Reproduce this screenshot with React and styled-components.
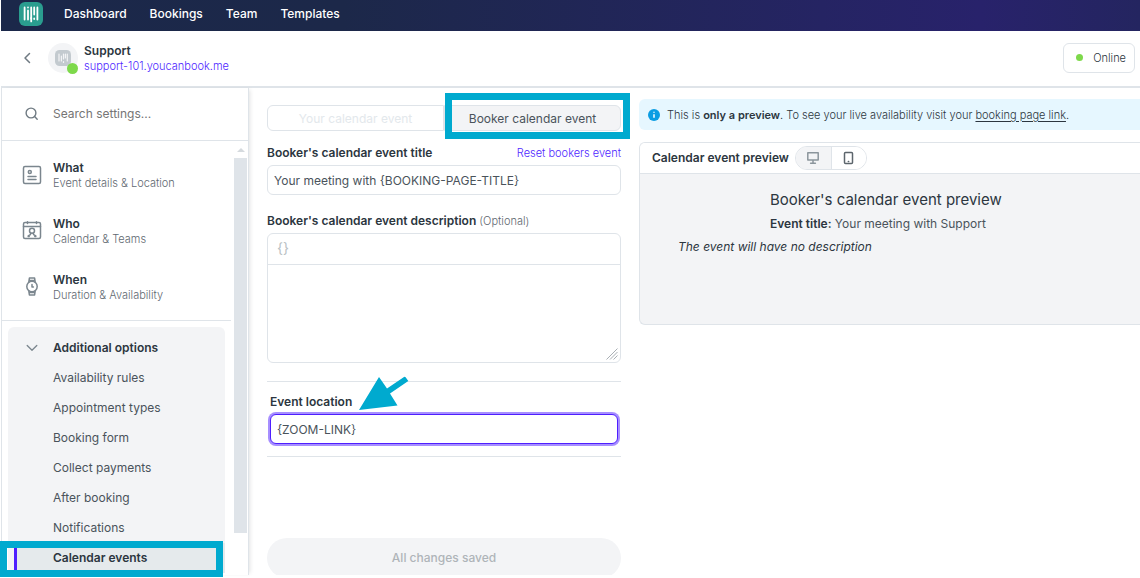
import React from "react";
import styled, { createGlobalStyle } from "styled-components";

const c = {
  ink: "#2c3640",
  text: "#4a535b",
  muted: "#5f6971",
  line: "#dfe4e9",
  soft: "#f3f4f6",
  violet: "#4f1fff",
  teal: "#00aacf",
  green: "#7ed94b",
};

const Global = createGlobalStyle`
  *, *::before, *::after { box-sizing: border-box; }
  body { margin: 0; background: #fff; }
  body, button, input, textarea { font-family: Inter, "Liberation Sans", sans-serif; }
  h1, h2, h3, p { margin: 0; }
  button { cursor: pointer; }
`;

const Page = styled.div`
  display: flex;
  flex-direction: column;
  height: 100vh;
  padding: 0 0 3px 1px;
  overflow: hidden;
  color: ${c.ink};
  font-size: 12px;
  line-height: 16px;
`;

const TopBar = styled.header`
  display: flex;
  flex: none;
  height: 31px;
  padding: 0 18px 4px;
  align-items: center;
  gap: 21px;
  background: linear-gradient(90deg, #1b284a 0%, #1c2849 30%, #252463 72%, #28226b 86%, #242560 100%);
`;

const Nav = styled.nav`
  display: flex;
  gap: 23px;
`;

const NavLink = styled.a`
  color: #fff;
  font-size: 12px;
  font-weight: 500;
  text-decoration: none;
`;

const ProfileBar = styled.div`
  display: flex;
  flex: none;
  height: 57px;
  padding: 0 5px 2px 20px;
  align-items: center;
  border-bottom: 2px solid ${c.line};
`;

const IconButton = styled.button`
  display: flex;
  padding: 0;
  border: 0;
  background: none;
  color: #6f7a82;
`;

const Avatar = styled.div`
  position: relative;
  display: flex;
  width: 30px;
  height: 30px;
  margin: 0 6px 0 14px;
  align-items: center;
  justify-content: center;
  border-radius: 50%;
  background: ${c.soft};
`;

const Dot = styled.span`
  width: ${(p) => p.$size}px;
  height: ${(p) => p.$size}px;
  border-radius: 50%;
  background: ${c.green};
`;

const AvatarDot = styled(Dot)`
  position: absolute;
  right: 0;
  bottom: -1px;
`;

const ProfileText = styled.div`
  display: flex;
  flex: 1;
  flex-direction: column;
  align-items: flex-start;
  padding-top: 2px;
`;

const ProfileName = styled.h1`
  font-size: 12px;
  font-weight: 600;
  line-height: 16px;
`;

const VioletLink = styled.a`
  color: ${c.violet};
  font-size: 11px;
  font-weight: 300;
  line-height: 15px;
  text-decoration: none;
`;

const StatusButton = styled.button`
  display: flex;
  height: 30px;
  padding: 0 8px 0 12px;
  align-items: center;
  gap: 10px;
  border: 1px solid ${c.line};
  border-radius: 6px;
  background: #fff;
  color: ${c.ink};
  font-size: 11px;
  font-weight: 300;
`;

const Columns = styled.div`
  display: grid;
  flex: 1;
  min-height: 0;
  grid-template-columns: 248px minmax(0, 390fr) minmax(0, 501fr);
`;

const Sidebar = styled.aside`
  display: flex;
  flex-direction: column;
  min-height: 0;
  border: solid ${c.line};
  border-width: 0 1px;
  box-shadow: 3px 0 4px -2px rgba(40, 50, 60, 0.14);
`;

const SearchRow = styled.label`
  display: flex;
  flex: none;
  height: 53px;
  padding: 0 20px 2px 22px;
  align-items: center;
  gap: 14px;
  border-bottom: 1px solid ${c.line};
  color: #6f7a82;
`;

const SearchInput = styled.input`
  flex: 1;
  min-width: 0;
  padding: 0;
  border: 0;
  outline: 0;
  background: none;
  font-size: 12px;

  &::placeholder { color: #757575; opacity: 1; }
`;

const SidebarScroll = styled.div`
  display: flex;
  flex: 1;
  min-height: 0;
`;

const SidebarList = styled.div`
  flex: 1;
`;

const Rail = styled.div`
  display: flex;
  flex-direction: column;
  width: 17px;
  padding: 0 1px 42px 3px;
  align-items: center;
`;

const RailArrow = styled.span`
  height: 17px;
  padding-top: 7px;
  line-height: 0;
`;

const RailThumb = styled.div`
  flex: 1;
  width: 13px;
  background: ${c.line};
`;

const Sections = styled.nav`
  padding: 6px 0 5px;
  border-bottom: 1px solid ${c.line};
`;

const Section = styled.a`
  display: flex;
  height: 56px;
  padding: 0 20px;
  align-items: center;
  gap: 11px;
  color: #7b868e;
  text-decoration: none;
`;

const SectionTitle = styled.div`
  color: ${c.ink};
  font-size: 12px;
  font-weight: 600;
  line-height: 16px;
`;

const SectionNote = styled.div`
  color: ${c.muted};
  font-size: 11px;
  font-weight: 300;
  line-height: 15px;
`;

const Options = styled.div`
  margin: 6px 6px 0;
  padding: 5px 0 2px;
  border-radius: 6px;
  background: ${c.soft};
`;

const OptionsHeader = styled.button`
  display: flex;
  width: 100%;
  height: 31px;
  padding: 0 18px;
  align-items: center;
  gap: 15px;
  border: 0;
  background: none;
  color: ${c.ink};
  font-size: 12px;
  font-weight: 600;

  svg { color: #7b868e; }
`;

const Option = styled.a`
  position: relative;
  display: flex;
  height: 30px;
  margin-left: 6px;
  padding-left: ${(p) => (p.$active ? 36 : 39)}px;
  align-items: center;
  border-left: ${(p) => (p.$active ? `3px solid ${c.violet}` : "0")};
  background: ${(p) => (p.$active ? "#e5eaec" : "none")};
  color: ${(p) => (p.$active ? c.ink : c.text)};
  font-size: 12px;
  font-weight: ${(p) => (p.$active ? 600 : 400)};
  text-decoration: none;
`;

const Marker = styled.span`
  position: absolute;
  inset: ${(p) => p.$inset};
  border: 7px solid ${c.teal};
  pointer-events: none;
`;

const Editor = styled.main`
  display: flex;
  flex-direction: column;
  min-height: 0;
  padding: 17px 18px 0;
  overflow: hidden;
`;

const Tabs = styled.div`
  position: relative;
  display: flex;
  flex: none;
  height: 26px;
`;

const Tab = styled.button`
  flex: 1;
  padding: 0;
  border: 1px solid ${c.line};
  border-radius: ${(p) => (p.$active ? "0 6px 6px 0" : "6px 0 0 6px")};
  background: ${(p) => (p.$active ? c.soft : "#fff")};
  color: ${(p) => (p.$active ? c.text : "#e3e8ec")};
  font-size: 12px;
`;

const FieldHead = styled.div`
  display: flex;
  flex: none;
  height: 16px;
  margin: ${(p) => p.$margin};
  align-items: center;
  justify-content: space-between;
`;

const Label = styled.label`
  font-size: 12px;
  font-weight: 600;
  line-height: 16px;
`;

const Optional = styled.span`
  color: ${c.muted};
  font-size: 11px;
  font-weight: 300;
`;

const TextInput = styled.input`
  flex: none;
  width: 100%;
  height: 30px;
  padding: 0 6px;
  border: 1px solid ${c.line};
  border-radius: 6px;
  outline: 0;
  background: #fff;
  color: ${c.text};
  font-size: 12px;
  ${(p) => p.$focused && `border-color: ${c.violet}; box-shadow: 0 0 0 2px #a78fff;`}
`;

const RichText = styled.div`
  display: flex;
  flex: none;
  flex-direction: column;
  border: 1px solid ${c.line};
  border-radius: 6px;
`;

const RichToolbar = styled.div`
  display: flex;
  height: 31px;
  padding: 0 9px 2px;
  align-items: center;
  border-bottom: 1px solid ${c.line};
`;

const BraceButton = styled.button`
  padding: 0;
  border: 0;
  background: none;
  color: #b9bfc4;
  font-size: 14px;
  line-height: 16px;
`;

const RichBody = styled.div`
  position: relative;
  display: flex;
`;

const RichArea = styled.textarea`
  flex: 1;
  height: 97px;
  padding: 6px;
  border: 0;
  border-radius: 6px;
  outline: 0;
  background: none;
  resize: none;
  font-size: 12px;
`;

const Grip = styled.svg`
  position: absolute;
  right: 2px;
  bottom: 2px;
`;

const Location = styled.section`
  position: relative;
  flex: none;
  margin-top: 18px;
  padding: 12px 3px;
  border: solid ${c.line};
  border-width: 1px 0;
`;

const Pointer = styled.svg`
  position: absolute;
  left: 92px;
  top: -7px;
  pointer-events: none;
`;

const SaveButton = styled.button`
  flex: none;
  height: 40px;
  margin-top: 81px;
  padding: 0 0 2px;
  border: 0;
  border-radius: 20px;
  background: ${c.soft};
  color: #afb4b9;
  font-size: 12px;
  font-weight: 500;
`;

const Preview = styled.section`
  padding-top: 11px;
`;

const Notice = styled.div`
  display: flex;
  height: 31px;
  padding: 0 9px;
  align-items: center;
  gap: 7px;
  border-radius: 6px 0 0 6px;
  background: #e6f7ff;
  font-size: 11px;
  font-weight: 300;
  white-space: nowrap;

  b { font-weight: 600; }
  a { color: ${c.ink}; text-underline-offset: 2px; }
`;

const Card = styled.article`
  margin-top: 12px;
  border: solid ${c.line};
  border-width: 1px 0 1px 1px;
  border-radius: 6px 0 0 6px;
  background: ${c.soft};
  overflow: hidden;
`;

const CardHead = styled.div`
  display: flex;
  height: 31px;
  padding-left: 12px;
  align-items: center;
  gap: 6px;
  border-bottom: 1px solid ${c.line};
  background: #fff;
`;

const CardTitle = styled.h2`
  font-size: 12px;
  font-weight: 600;
`;

const Devices = styled.div`
  display: flex;
  height: 24px;
  border: 1px solid ${c.line};
  border-radius: 12px;
  overflow: hidden;
`;

const Device = styled.button`
  display: flex;
  width: 35px;
  padding: 0;
  align-items: center;
  justify-content: center;
  border: 0;
  background: ${(p) => (p.$active ? c.soft : "#fff")};
  color: ${(p) => (p.$active ? "#8b959c" : "#5c656c")};

  & + & { border-left: 1px solid ${c.line}; }
`;

const CardBody = styled.div`
  min-height: 150px;
  padding: 16px 38px;
`;

const PreviewHead = styled.h3`
  padding-left: 92px;
  font-size: 15px;
  font-weight: 400;
  line-height: 20px;
`;

const PreviewLine = styled.p`
  margin-top: ${(p) => (p.$note ? 7 : 6)}px;
  padding-left: ${(p) => (p.$note ? 0 : 92)}px;
  color: ${(p) => (p.$note ? c.ink : c.text)};
  font-size: 12px;
  font-style: ${(p) => (p.$note ? "italic" : "normal")};
  line-height: 16px;

  b { color: ${c.ink}; font-weight: 600; }
`;

const Logo = () => (
  <svg width="24" height="29" viewBox="0 0 24 29" aria-label="Home">
    <rect x="0" y="3" width="24" height="24" rx="6" fill="#2a9d8f" />
    <g stroke="#fff" strokeWidth="1.8" strokeLinecap="round">
      <path d="M5.6 8.5v12M9 11.5v9M12.2 8.5v11M15.2 8.5v7M18.4 8.5v12M15.2 19.4v.6" />
      <path d="M9 8.4v.2M12.2 19v3.4" />
    </g>
  </svg>
);

const line = { fill: "none", stroke: "currentColor", strokeWidth: 1.5, strokeLinecap: "round", strokeLinejoin: "round" };

const DetailsIcon = () => (
  <svg width="20" height="20" viewBox="0 0 20 20" {...line}>
    <rect x="1.5" y="1.5" width="17" height="17" rx="1.5" />
    <circle cx="7.8" cy="7" r="1.5" />
    <path d="M6 11.5h8M6 14.5h8" />
  </svg>
);

const PeopleIcon = () => (
  <svg width="20" height="20" viewBox="0 0 20 20" {...line}>
    <rect x="1.5" y="1.5" width="17" height="16" rx="1.5" />
    <path d="M1.5 5.4h17M5.5 .8v1.8M14.5 .8v1.8" />
    <circle cx="10" cy="9.8" r="2.5" />
    <path d="M6.2 15.4v-.5l2.2-1.2.3-1.4M13.8 15.4v-.5l-2.2-1.2-.3-1.4M6.2 15.4h1M12.8 15.4h1" />
  </svg>
);

const WatchIcon = () => (
  <svg width="20" height="20" viewBox="0 0 20 20" {...line}>
    <circle cx="10" cy="9.5" r="5.2" />
    <path d="M6.8 5.1l.6-4h5.2l.6 4M6.8 13.9l.6 4.1h5.2l.6-4.1M7.4 3.4h5.2M7.4 15.6h5.2M10 7.4V10h1.4" />
  </svg>
);

const sections = [
  { title: "What", note: "Event details & Location", Icon: DetailsIcon },
  { title: "Who", note: "Calendar & Teams", Icon: PeopleIcon },
  { title: "When", note: "Duration & Availability", Icon: WatchIcon },
];

const options = [
  "Availability rules",
  "Appointment types",
  "Booking form",
  "Collect payments",
  "After booking",
  "Notifications",
  "Calendar events",
];

export default function App() {
  return (
    <>
      <Global />
      <Page>
        <TopBar>
          <Logo />
          <Nav>
            {["Dashboard", "Bookings", "Team", "Templates"].map((item) => (
              <NavLink href="#" key={item}>{item}</NavLink>
            ))}
          </Nav>
        </TopBar>

        <ProfileBar>
          <IconButton aria-label="Back">
            <svg width="13" height="14" viewBox="0 0 13 14" {...line}>
              <path d="M8.5 2.5L4 7l4.5 4.5" />
            </svg>
          </IconButton>
          <Avatar>
            <svg width="16" height="16" viewBox="0 0 16 16">
              <rect width="16" height="16" rx="4.5" fill="#c3cacf" />
              <path d="M4 4v7M6.4 6v5M8.5 4v5M10.4 4v4M12.3 4v7M8.5 11.6v.9" stroke="#f3f4f6" strokeWidth="1.2" strokeLinecap="round" />
            </svg>
            <AvatarDot $size={11} />
          </Avatar>
          <ProfileText>
            <ProfileName>Support</ProfileName>
            <VioletLink href="#">support-101.youcanbook.me</VioletLink>
          </ProfileText>
          <StatusButton><Dot $size={7} />Online</StatusButton>
        </ProfileBar>

        <Columns>
          <Sidebar>
            <SearchRow>
              <svg width="15" height="15" viewBox="0 0 15 15" {...line} strokeWidth="1.4">
                <circle cx="7" cy="7" r="4.9" />
                <path d="M10.6 10.6l2.6 2.6" />
              </svg>
              <SearchInput aria-label="Search settings" placeholder="Search settings..." />
            </SearchRow>
            <SidebarScroll>
              <SidebarList>
                <Sections>
                  {sections.map(({ title, note, Icon }) => (
                    <Section href="#" key={title}>
                      <Icon />
                      <div>
                        <SectionTitle>{title}</SectionTitle>
                        <SectionNote>{note}</SectionNote>
                      </div>
                    </Section>
                  ))}
                </Sections>
                <Options>
                  <OptionsHeader aria-expanded="true">
                    <svg width="12" height="12" viewBox="0 0 12 12" {...line} strokeWidth="1.3">
                      <path d="M1.2 3.5L6 8.3l4.8-4.8" />
                    </svg>
                    Additional options
                  </OptionsHeader>
                  {options.map((name) => {
                    const active = name === "Calendar events";
                    return (
                      <Option href="#" key={name} $active={active}>
                        {name}
                        {active && <Marker $inset="-2px 2px -4px -17px" />}
                      </Option>
                    );
                  })}
                </Options>
              </SidebarList>
              <Rail aria-hidden="true">
                <RailArrow>
                  <svg width="8" height="4" viewBox="0 0 8 4"><path d="M0 4l4-4 4 4z" fill="#d5dade" /></svg>
                </RailArrow>
                <RailThumb />
              </Rail>
            </SidebarScroll>
          </Sidebar>

          <Editor>
            <Tabs>
              <Tab>Your calendar event</Tab>
              <Tab $active>Booker calendar event</Tab>
              <Marker $inset="-12px -9px -8px 178px" />
            </Tabs>

            <FieldHead $margin="14px 0 4px">
              <Label htmlFor="title">Booker's calendar event title</Label>
              <VioletLink href="#">Reset bookers event</VioletLink>
            </FieldHead>
            <TextInput id="title" defaultValue="Your meeting with {BOOKING-PAGE-TITLE}" />

            <FieldHead $margin="18px 0 4px">
              <Label htmlFor="description">
                Booker's calendar event description <Optional>(Optional)</Optional>
              </Label>
            </FieldHead>
            <RichText>
              <RichToolbar>
                <BraceButton aria-label="Insert placeholder">{"{}"}</BraceButton>
              </RichToolbar>
              <RichBody>
                <RichArea id="description" />
                <Grip width="12" height="12" viewBox="0 0 12 12" stroke="#a9afb4" strokeWidth="1">
                  <path d="M.5 11.5l11-11M4 11.5l7.5-7.5M7.5 11.5l4-4" />
                </Grip>
              </RichBody>
            </RichText>

            <Location>
              <FieldHead $margin="0 0 4px">
                <Label htmlFor="location">Event location</Label>
              </FieldHead>
              <TextInput id="location" $focused defaultValue="{ZOOM-LINK}" />
              <Pointer width="52" height="36" viewBox="0 0 52 36" aria-hidden="true">
                <path d="M0 35L20 2 28 13.5 45 2q1-.6 1.8.4l2.5 3.6L31 18.5l7.5 12z" fill={c.teal} />
              </Pointer>
            </Location>

            <SaveButton>All changes saved</SaveButton>
          </Editor>

          <Preview>
            <Notice>
              <svg width="12" height="12" viewBox="0 0 12 12">
                <circle cx="6" cy="6" r="6" fill="#0b9de3" />
                <path d="M6 5.2v3.6M6 2.8v1" stroke="#fff" strokeWidth="1.5" />
              </svg>
              <p>
                This is <b>only a preview</b>. To see your live availability visit your <a href="#">booking page link</a>.
              </p>
            </Notice>
            <Card>
              <CardHead>
                <CardTitle>Calendar event preview</CardTitle>
                <Devices>
                  <Device $active aria-label="Desktop">
                    <svg width="12" height="12" viewBox="0 0 12 12" {...line}>
                      <path d="M.8.8h10.4v7.2H.8zM6 8v3M3.6 11.2h4.8" />
                    </svg>
                  </Device>
                  <Device aria-label="Mobile">
                    <svg width="12" height="14" viewBox="0 0 12 14" {...line}>
                      <rect x="1.5" y="1.5" width="8" height="11" rx="1" />
                      <path d="M5.3 10.4h.4" />
                    </svg>
                  </Device>
                </Devices>
              </CardHead>
              <CardBody>
                <PreviewHead>Booker's calendar event preview</PreviewHead>
                <PreviewLine><b>Event title:</b> Your meeting with Support</PreviewLine>
                <PreviewLine $note>The event will have no description</PreviewLine>
              </CardBody>
            </Card>
          </Preview>
        </Columns>
      </Page>
    </>
  );
}
